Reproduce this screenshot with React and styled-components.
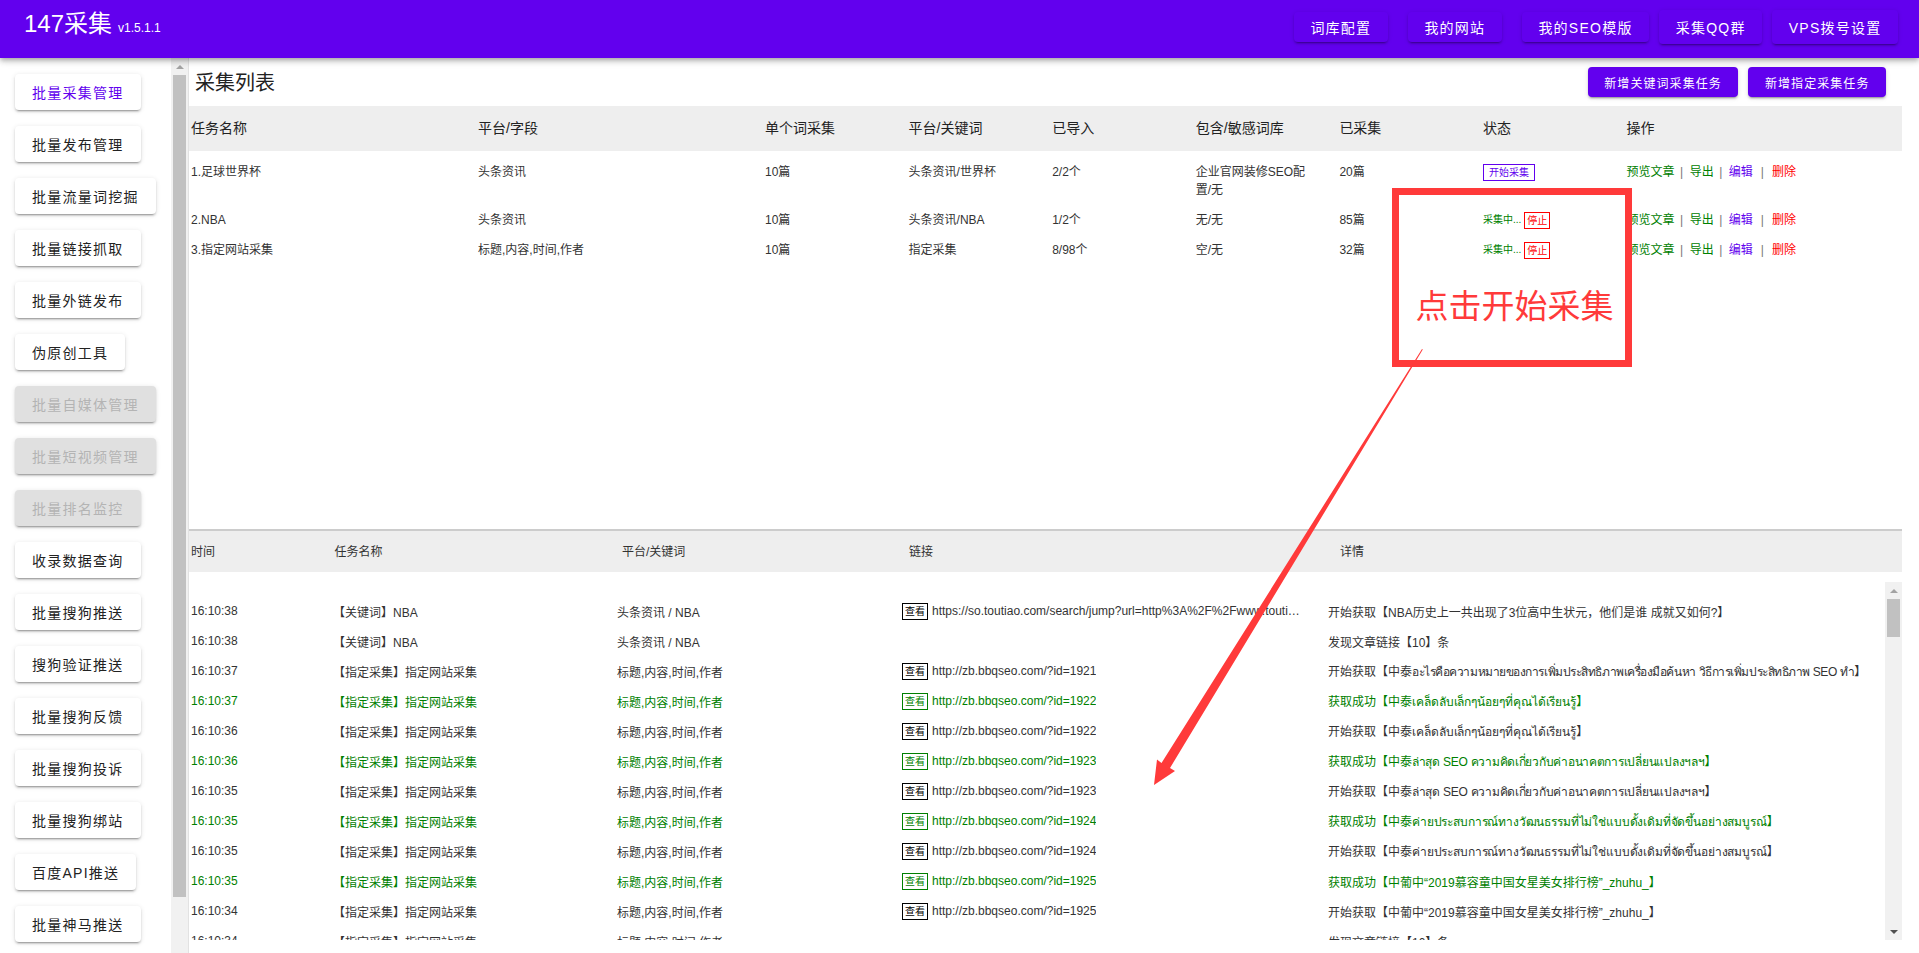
import React from "react";
import styled, { createGlobalStyle, css } from "styled-components";

const FONT = `"Liberation Sans", "Noto Sans CJK SC", "Noto Sans", "DejaVu Sans", sans-serif`;
const PURPLE = "#6200ee";
const GREEN = "#008000";
const ALERT = "#ff3a3a";

const Global = createGlobalStyle`
  html, body { margin: 0; height: 100%; overflow: hidden; background: #fff; }
  body { font-family: ${FONT}; color: #333; }
  * { box-sizing: border-box; }
`;

const Page = styled.div`
  position: relative;
  display: flex;
  flex-direction: column;
  height: 100vh;
  overflow: hidden;
`;

const TopBar = styled.header`
  position: relative;
  z-index: 2;
  flex: none;
  display: flex;
  align-items: center;
  justify-content: space-between;
  height: 58px;
  padding: 0 21px 0 24px;
  background: ${PURPLE};
  box-shadow: 0 2px 4px -1px rgba(0,0,0,.2), 0 4px 5px rgba(0,0,0,.14), 0 1px 10px rgba(0,0,0,.12);
`;

const Brand = styled.div`
  color: #fff;
  font-size: 24px;
  line-height: 28px;
  padding-bottom: 6px;
`;

const Version = styled.span`
  margin-left: 6px;
  font-size: 12px;
`;

const TopNav = styled.nav`
  display: flex;
  align-items: center;
  padding-bottom: 5px;
`;

const buttonBase = css`
  display: inline-flex;
  align-items: center;
  justify-content: center;
  flex: none;
  border: 0;
  border-radius: 4px;
  font-family: ${FONT};
  letter-spacing: 0.0892857em;
  white-space: nowrap;
  box-shadow: 0 3px 1px -2px rgba(0,0,0,.2), 0 2px 2px rgba(0,0,0,.14), 0 1px 5px rgba(0,0,0,.12);
`;

const TopButton = styled.button`
  ${buttonBase}
  height: ${(p) => (p.$tall ? "34px" : "30px")};
  margin-left: ${(p) => (p.$near ? "10px" : "20px")};
  padding: 0 16.5px;
  font-size: 14px;
  color: #fff;
  background: ${PURPLE};
`;

const Body = styled.div`
  flex: 1;
  min-height: 0;
  display: flex;
`;

const SideBar = styled.aside`
  position: relative;
  z-index: 1;
  flex: none;
  width: 188px;
  display: flex;
`;

const SideList = styled.div`
  flex: 1;
  min-width: 0;
  overflow: hidden;
  display: flex;
  flex-direction: column;
  align-items: flex-start;
  gap: 16px;
  padding: 16px 0 0 15px;
`;

const SideButton = styled.button`
  ${buttonBase}
  height: 36px;
  padding: 0 17px;
  font-size: 14px;
  color: ${(p) => (p.$active ? PURPLE : p.disabled ? "#b4b4b4" : "#222")};
  background: ${(p) => (p.disabled ? "#e0e0e0" : "#fff")};
`;

const ScrollTrack = styled.div`
  flex: none;
  width: 17px;
  display: flex;
  flex-direction: column;
  align-items: center;
  background: #f1f1f1;
  ${(p) => p.$edge && "box-shadow: 1px 0 0 #e2e2e2;"}
`;

const ScrollArrow = styled.div`
  flex: none;
  width: 17px;
  height: 17px;
  margin-top: ${(p) => (p.$down ? "auto" : "0")};
  display: flex;
  align-items: center;
  justify-content: center;
  &::before {
    content: "";
    border-left: 4px solid transparent;
    border-right: 4px solid transparent;
    ${(p) => (p.$down ? "border-top: 4px solid #505050;" : "border-bottom: 4px solid #a3a3a3;")}
  }
`;

const ScrollThumb = styled.div`
  flex: none;
  width: 13px;
  height: ${(p) => p.$h}px;
  background: #c1c1c1;
`;

const Main = styled.main`
  flex: 1;
  min-width: 0;
  padding-right: 17px;
  display: flex;
  flex-direction: column;
`;

const TitleRow = styled.div`
  flex: none;
  height: 48px;
  display: flex;
  align-items: center;
  justify-content: space-between;
  padding: 0 16px 0 7px;
`;

const PageTitle = styled.h1`
  margin: 0;
  padding-bottom: 2px;
  font-size: 20px;
  font-weight: 400;
  color: #222;
`;

const Actions = styled.div`
  display: flex;
  gap: 10px;
`;

const PrimaryButton = styled.button`
  ${buttonBase}
  height: 30px;
  padding: 0 16.5px;
  font-size: 12px;
  color: #fff;
  background: ${PURPLE};
`;

const TASK_COLS = "287px 287px repeat(6, 143.6px) 1fr";

const TaskSection = styled.section`
  flex: none;
  height: 423px;
`;

const TaskHead = styled.div`
  display: grid;
  grid-template-columns: ${TASK_COLS};
  align-items: center;
  height: 45px;
  margin-bottom: 6px;
  padding-bottom: 3px;
  background: #eee;
  font-size: 14px;
  color: #222;
`;

const TaskRow = styled.div`
  display: grid;
  grid-template-columns: ${TASK_COLS};
  padding: 6px 0;
  font-size: 12px;
  line-height: 18px;
`;

const Cell = styled.div`
  padding: 0 ${(p) => (p.$wrap ? "30px" : "3px")} 0 3px;
  min-width: 0;
`;

const StatusCell = styled(Cell)`
  display: flex;
  align-items: center;
  gap: 3px;
  height: 18px;
  font-size: 10px;
  color: ${GREEN};
`;

const Tag = styled.span`
  display: inline-block;
  flex: none;
  height: 17px;
  line-height: 15px;
  padding: 0 ${(p) => p.$pad || 2}px;
  border: 1px solid ${(p) => p.$color};
  color: ${(p) => p.$color};
  font-size: 10px;
  white-space: nowrap;
`;

const Link = styled.span`
  color: ${(p) => p.$color};
`;

const Sep = styled.span`
  margin: 0 ${(p) => (p.$wide ? 8 : 6.5)}px 0 ${(p) => (p.$wide ? 8 : 5.5)}px;
  color: #777;
`;

const LogHead = styled.div`
  flex: none;
  display: grid;
  grid-template-columns: 143.5px 287.5px 287px 431px 1fr;
  align-items: center;
  height: 43px;
  padding: 0 0 2px 3px;
  border-top: 2px solid #ccc;
  background: #eee;
  font-size: 12px;
`;

const LogBody = styled.div`
  flex: none;
  height: 358px;
  margin-top: 10px;
  display: flex;
`;

const LogList = styled.div`
  flex: 1;
  min-width: 0;
  overflow: hidden;
  padding-top: 14px;
`;

const LogRow = styled.div`
  display: grid;
  grid-template-columns: 142px 284px 285px 426px 1fr;
  align-items: center;
  height: 30px;
  padding-left: 3px;
  font-size: 12px;
  color: ${(p) => (p.$ok ? GREEN : "#333")};
  white-space: nowrap;
`;

const LinkCell = styled.div`
  display: flex;
  align-items: center;
  gap: 4px;
  min-width: 0;
  padding-right: 28px;
`;

const Url = styled.span`
  overflow: hidden;
  text-overflow: ellipsis;
  min-width: 0;
`;

const ThaiTitle = styled.span`
  letter-spacing: ${(p) => p.$track || 0}px;
`;

const Frame = styled.div`
  position: absolute;
  left: 1392px;
  top: 188px;
  width: 240px;
  height: 179px;
  padding-top: 93px;
  border: 7px solid ${ALERT};
  text-align: center;
  color: ${ALERT};
  font-size: 33px;
  line-height: 38px;
  white-space: nowrap;
  z-index: 3;
  pointer-events: none;
`;

const FrameLabel = styled.span`
  display: block;
  margin-left: 5px;
`;

const ArrowSvg = styled.svg`
  position: absolute;
  left: 0;
  top: 0;
  z-index: 4;
  pointer-events: none;
`;

const navItems = [
  { t: "词库配置" },
  { t: "我的网站" },
  { t: "我的SEO模版" },
  { t: "采集QQ群", near: true, tall: true },
  { t: "VPS拨号设置", near: true, tall: true },
];

const sideItems = [
  { t: "批量采集管理", active: true },
  { t: "批量发布管理" },
  { t: "批量流量词挖掘" },
  { t: "批量链接抓取" },
  { t: "批量外链发布" },
  { t: "伪原创工具" },
  { t: "批量自媒体管理", disabled: true },
  { t: "批量短视频管理", disabled: true },
  { t: "批量排名监控", disabled: true },
  { t: "收录数据查询" },
  { t: "批量搜狗推送" },
  { t: "搜狗验证推送" },
  { t: "批量搜狗反馈" },
  { t: "批量搜狗投诉" },
  { t: "批量搜狗绑站" },
  { t: "百度API推送" },
  { t: "批量神马推送" },
];

const taskHeads = ["任务名称", "平台/字段", "单个词采集", "平台/关键词", "已导入", "包含/敏感词库", "已采集", "状态", "操作"];

const tasks = [
  { name: "1.足球世界杯", field: "头条资讯", each: "10篇", kw: "头条资讯/世界杯", imp: "2/2个", lib: "企业官网装修SEO配置/无", got: "20篇", running: false },
  { name: "2.NBA", field: "头条资讯", each: "10篇", kw: "头条资讯/NBA", imp: "1/2个", lib: "无/无", got: "85篇", running: true },
  { name: "3.指定网站采集", field: "标题,内容,时间,作者", each: "10篇", kw: "指定采集", imp: "8/98个", lib: "空/无", got: "32篇", running: true },
];

const T1 = "【指定采集】指定网站采集";
const F1 = "标题,内容,时间,作者";
const U = "http://zb.bbqseo.com/?id=";
const TH1 = "อะไรคือความหมายของการเพิ่มประสิทธิภาพเครื่องมือค้นหา วิธีการเพิ่มประสิทธิภาพ SEO ทำ";
const TH2 = "เคล็ดลับเล็กๆน้อยๆที่คุณได้เรียนรู้";
const TH3 = "ล่าสุด SEO ความคิดเกี่ยวกับค่าอนาคตการเปลี่ยนแปลงฯลฯ";
const TH4 = "ค่ายประสบการณ์ทางวัฒนธรรมที่ไม่ใช่แบบดั้งเดิมที่จัดขึ้นอย่างสมบูรณ์";
const ZH = "【中葡中“2019慕容童中国女星美女排行榜”_zhuhu_】";

const logs = [
  { time: "16:10:38", task: "【关键词】NBA", kw: "头条资讯 / NBA", url: "https://so.toutiao.com/search/jump?url=http%3A%2F%2Fwww.toutiao.com%2Fa6836", info: "开始获取【NBA历史上一共出现了3位高中生状元，他们是谁 成就又如何?】" },
  { time: "16:10:38", task: "【关键词】NBA", kw: "头条资讯 / NBA", info: "发现文章链接【10】条" },
  { time: "16:10:37", task: T1, kw: F1, url: U + "1921", info: "开始获取", thai: TH1, track: -0.45 },
  { time: "16:10:37", task: T1, kw: F1, url: U + "1922", info: "获取成功", thai: TH2, track: -0.08, ok: true },
  { time: "16:10:36", task: T1, kw: F1, url: U + "1922", info: "开始获取", thai: TH2, track: -0.08 },
  { time: "16:10:36", task: T1, kw: F1, url: U + "1923", info: "获取成功", thai: TH3, track: -0.27, ok: true },
  { time: "16:10:35", task: T1, kw: F1, url: U + "1923", info: "开始获取", thai: TH3, track: -0.27 },
  { time: "16:10:35", task: T1, kw: F1, url: U + "1924", info: "获取成功", thai: TH4, track: -0.15, ok: true },
  { time: "16:10:35", task: T1, kw: F1, url: U + "1924", info: "开始获取", thai: TH4, track: -0.15 },
  { time: "16:10:35", task: T1, kw: F1, url: U + "1925", info: "获取成功" + ZH, ok: true },
  { time: "16:10:34", task: T1, kw: F1, url: U + "1925", info: "开始获取" + ZH },
  { time: "16:10:34", task: T1, kw: F1, info: "发现文章链接【10】条" },
];

export default function App() {
  return (
    <Page>
      <Global />
      <TopBar>
        <Brand>
          147采集<Version>v1.5.1.1</Version>
        </Brand>
        <TopNav>
          {navItems.map((n) => (
            <TopButton key={n.t} $near={n.near} $tall={n.tall}>{n.t}</TopButton>
          ))}
        </TopNav>
      </TopBar>
      <Body>
        <SideBar>
          <SideList>
            {sideItems.map((s) => (
              <SideButton key={s.t} $active={s.active} disabled={s.disabled}>{s.t}</SideButton>
            ))}
          </SideList>
          <ScrollTrack $edge>
            <ScrollArrow />
            <ScrollThumb $h={821.5} />
          </ScrollTrack>
        </SideBar>
        <Main>
          <TitleRow>
            <PageTitle>采集列表</PageTitle>
            <Actions>
              <PrimaryButton>新增关键词采集任务</PrimaryButton>
              <PrimaryButton>新增指定采集任务</PrimaryButton>
            </Actions>
          </TitleRow>
          <TaskSection>
            <TaskHead>
              {taskHeads.map((h) => (
                <Cell key={h}>{h}</Cell>
              ))}
            </TaskHead>
            {tasks.map((t) => (
              <TaskRow key={t.name}>
                <Cell>{t.name}</Cell>
                <Cell>{t.field}</Cell>
                <Cell>{t.each}</Cell>
                <Cell>{t.kw}</Cell>
                <Cell>{t.imp}</Cell>
                <Cell $wrap>{t.lib}</Cell>
                <Cell>{t.got}</Cell>
                {t.running ? (
                  <StatusCell>
                    采集中...<Tag $color="#f00">停止</Tag>
                  </StatusCell>
                ) : (
                  <StatusCell>
                    <Tag $color={PURPLE} $pad={5}>开始采集</Tag>
                  </StatusCell>
                )}
                <Cell>
                  <Link $color={GREEN}>预览文章</Link>
                  <Sep>|</Sep>
                  <Link $color={GREEN}>导出</Link>
                  <Sep>|</Sep>
                  <Link $color={PURPLE}>编辑</Link>
                  <Sep $wide>|</Sep>
                  <Link $color="#f00">删除</Link>
                </Cell>
              </TaskRow>
            ))}
          </TaskSection>
          <LogHead>
            <div>时间</div>
            <div>任务名称</div>
            <div>平台/关键词</div>
            <div>链接</div>
            <div>详情</div>
          </LogHead>
          <LogBody>
            <LogList>
              {logs.map((l, i) => (
                <LogRow key={i} $ok={l.ok}>
                  <div>{l.time}</div>
                  <div>{l.task}</div>
                  <div>{l.kw}</div>
                  <LinkCell>
                    {l.url && (
                      <>
                        <Tag $color={l.ok ? GREEN : "#000"}>查看</Tag>
                        <Url>{l.url}</Url>
                      </>
                    )}
                  </LinkCell>
                  <div>
                    {l.info}
                    {l.thai && (
                      <>
                        【中泰<ThaiTitle $track={l.track}>{l.thai}</ThaiTitle>】
                      </>
                    )}
                  </div>
                </LogRow>
              ))}
            </LogList>
            <ScrollTrack>
              <ScrollArrow />
              <ScrollThumb $h={38} />
              <ScrollArrow $down />
            </ScrollTrack>
          </LogBody>
        </Main>
      </Body>
      <Frame>
        <FrameLabel>点击开始采集</FrameLabel>
      </Frame>
      <ArrowSvg width="1919" height="953" viewBox="0 0 1919 953">
        <path d="M1422 349 L1422.8 349.6 L1170 768 L1175 771 L1154 785 L1157 759.5 L1161.5 763 Z" fill={ALERT} />
      </ArrowSvg>
    </Page>
  );
}
